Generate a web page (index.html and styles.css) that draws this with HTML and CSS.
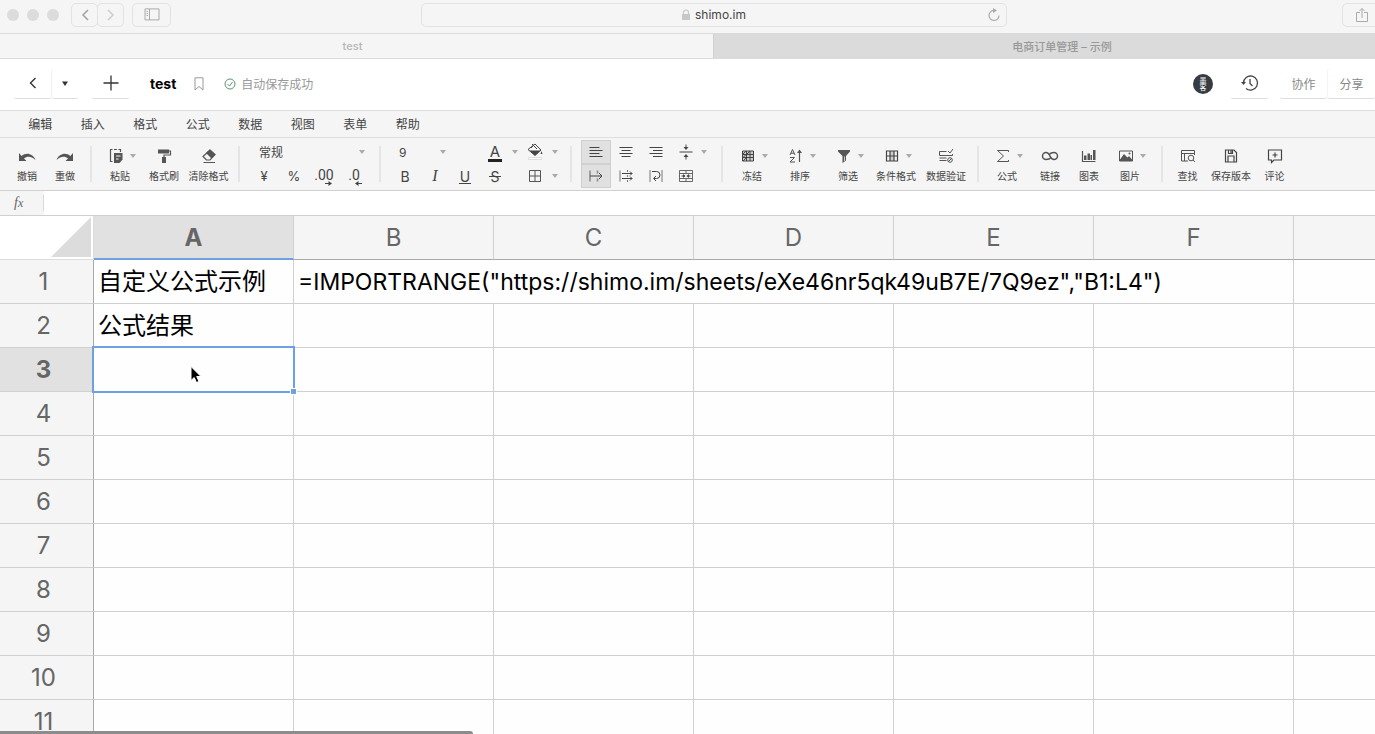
FILE: index.html
```html
<!DOCTYPE html>
<html lang="zh-CN">
<head>
  <meta charset="UTF-8">
  <title>test - 石墨表格</title>
  <link rel="stylesheet" href="styles.css">
</head>
<body>
<div class="page">

  <!-- browser window -->
  <div class="chrome">
    <div class="chrome-bar">
      <div class="chrome-left">
        <span class="dot"></span><span class="dot"></span><span class="dot"></span>
        <div class="nav-btns">
          <button class="chrome-btn nav" aria-label="后退"><svg width="10" height="14" viewBox="0 0 10 14"><path d="M8 2 3 7l5 5" stroke="#a2a2a2" stroke-width="1.5"/></svg></button>
          <button class="chrome-btn nav" aria-label="前进"><svg width="10" height="14" viewBox="0 0 10 14"><path d="m2 2 5 5-5 5" stroke="#cdcdcd" stroke-width="1.5"/></svg></button>
        </div>
        <button class="chrome-btn" aria-label="边栏"><svg width="16" height="13" viewBox="0 0 16 13"><path d="M1 .9h14v11H1zM5.500 1v11M2.500 3.500H4M2.500 5.500H4M2.500 7.500H4" stroke="#aaa"/></svg></button>
      </div>
      <div class="address">
        <span class="url">
          <svg width="10" height="12" viewBox="0 0 10 12"><path d="M2.500 6V3.500a2.500 2.500 0 0 1 5 0V6" stroke="#c8c8c8" stroke-width="1.200"/><path d="M1 5h8v6H1z" fill="#c8c8c8"/></svg>
          shimo.im
        </span>
        <button class="plain reload" aria-label="刷新"><svg width="14" height="14" viewBox="0 0 14 14"><path d="M7.500 2.500A5 5 0 1 0 12 7.500" stroke="#aaa" stroke-width="1.200"/><path d="M6 0v5l4-2.500z" fill="#aaa"/></svg></button>
      </div>
      <div class="chrome-right">
        <button class="chrome-btn" aria-label="共享"><svg width="14" height="16" viewBox="0 0 14 16"><path d="M5 5.500H1.500v9h11v-9H9M7 11V1.500M4.500 4 7 1.500 9.500 4" stroke="#aaa"/></svg></button>
      </div>
    </div>
    <div class="chrome-tabs">
      <a class="chrome-tab current" href="#">test</a>
      <a class="chrome-tab other" href="#">电商订单管理 – 示例</a>
      <span class="tab-add"></span>
    </div>
  </div>

  <!-- document header -->
  <header class="doc-head">
    <div class="btn-set">
      <button class="head-btn" aria-label="返回"><svg width="14" height="14" viewBox="0 0 14 14"><path d="M9.500 2 4.500 7l5 5" stroke="#333" stroke-width="1.400"/></svg></button>
      <button class="head-btn narrow" aria-label="更多"><svg width="6" height="5" viewBox="0 0 6 5"><path d="M0 .5h6L3 5z" fill="#333"/></svg></button>
    </div>
    <button class="head-btn add" aria-label="新建"><svg width="16" height="16" viewBox="0 0 16 16"><path d="M8 .5v15M.5 8h15" stroke="#333" stroke-width="1.300"/></svg></button>
    <h1 class="doc-title">test</h1>
    <button class="plain bookmark" aria-label="收藏"><svg width="10" height="14" viewBox="0 0 10 14"><path d="M1 .8h8v12.200L5 9.500 1 13z" stroke="#999"/></svg></button>
    <span class="saved"><svg width="12" height="12" viewBox="0 0 12 12"><circle cx="6" cy="6" r="5" stroke="#5f9277"/><path d="m3.500 6 2 2 3-4" stroke="#5f9277"/></svg>自动保存成功</span>
    <div class="head-right">
      <span class="avatar"><span>墨</span><span>客</span></span>
      <button class="head-btn history" aria-label="历史"><svg width="18" height="18" viewBox="0 0 18 18"><path d="M2.500 9A7 7 0 1 1 5 14.400" stroke="#444" stroke-width="1.300"/><path d="M0 8h5l-2.500 3z" fill="#444"/><path d="M9 5v4.500l2.500 2.500" stroke="#444" stroke-width="1.300"/></svg></button>
      <div class="btn-set">
        <button class="head-btn text">协作</button>
        <button class="head-btn text">分享</button>
      </div>
    </div>
  </header>

  <nav class="menu">
    <button>编辑</button><button>插入</button><button>格式</button><button>公式</button>
    <button>数据</button><button>视图</button><button>表单</button><button>帮助</button>
  </nav>

  <!-- toolbar -->
  <div class="toolbar">
    <div class="group edit">
      <button class="tool"><span class="ico"><svg width="18" height="16" viewBox="0 0 18 16"><path d="M1 5v8h7.500L6 10.600C9 8 13 8 17.500 12 15 5.500 8 4 3.600 8z" fill="#555"/></svg></span>撤销</button>
      <button class="tool"><span class="ico"><svg width="18" height="16" viewBox="0 0 18 16"><path d="M17 5v8H9.500l2.500-2.400C9 8 5 8 .5 12 3 5.500 10 4 14.400 8z" fill="#555"/></svg></span>重做</button>
    </div>
    <div class="group clip">
      <button class="tool"><span class="ico drop"><svg width="16" height="16" viewBox="0 0 16 16"><path d="M4.500 1.500h-2v12h2M10.500 1.500h2V4M6 1.500h3" stroke="#555" stroke-width="1.200"/><path d="M6 5h8.500v6.500L11.500 15H6z" fill="#555"/><path d="M8 8h4.500M8 11h2.500" stroke="#f5f5f5"/></svg><i class="caret"></i></span>粘贴</button>
      <button class="tool"><span class="ico"><svg width="16" height="16" viewBox="0 0 16 16"><path d="M2 1.500h11v4H2zM6 9h4v6H6z" fill="#555"/><path d="M13 3h1.500v4H8v2" stroke="#555" stroke-width="1.200"/></svg></span>格式刷</button>
      <button class="tool clear"><span class="ico"><svg width="16" height="16" viewBox="0 0 16 16"><path d="m9 1.500 5.500 5-4 4L5 5z" fill="#555"/><path d="M9 2 2 8.500 5.500 12H9l5-5.500zM2.500 14.500H14" stroke="#555" stroke-width="1.200"/></svg></span>清除格式</button>
    </div>
    <div class="group number">
      <label class="pick wide"><select aria-label="数字格式"><option>常规</option></select><i class="caret"></i></label>
      <button>¥</button>
      <button>%</button>
      <button class="dec" aria-label="增加小数位"><span>.00</span><svg width="7" height="5" viewBox="0 0 7 5"><path d="M0 2.500h4" stroke="#444"/><path d="M3.500 0v5L7 2.500z" fill="#444"/></svg></button>
      <button class="dec" aria-label="减少小数位"><span>.0</span><svg width="7" height="5" viewBox="0 0 7 5"><path d="M3 2.500h4" stroke="#444"/><path d="M3.500 0v5L0 2.500z" fill="#444"/></svg></button>
    </div>
    <div class="group font">
      <label class="pick size"><select aria-label="字号"><option>9</option></select><i class="caret"></i></label>
      <button class="color" aria-label="文字颜色">A</button><i class="caret"></i>
      <button aria-label="填充颜色"><svg width="16" height="18" viewBox="0 0 16 18"><path d="M1 6.500 8 1l6 6-6 5.500zM4 5l3-3M5 1l5 5" stroke="#444"/><path d="M2.500 7.500h11L8 12.500zM14.500 8l1 3h-2z" fill="#444"/><path d="M1.500 14.500h13v2h-13z" fill="#fff" stroke="#ddd"/></svg></button><i class="caret"></i>
      <button class="letter" aria-label="加粗">B</button>
      <button class="letter italic" aria-label="斜体">I</button>
      <button class="letter under" aria-label="下划线">U</button>
      <button class="letter strike" aria-label="删除线">S</button>
      <span></span>
      <button aria-label="边框"><svg width="14" height="14" viewBox="0 0 14 14"><path d="M1.500 1.500h11v11h-11zM7 1.500v11M1.500 7h11" stroke="#555"/></svg></button><i class="caret"></i>
    </div>
    <div class="group align">
      <button class="on" aria-label="左对齐"><svg width="14" height="12" viewBox="0 0 14 12"><path d="M.5 1.500h10M.5 4.500h13M.5 7.500h10M.5 10.500h13" stroke="#444"/></svg></button>
      <button aria-label="居中"><svg width="14" height="12" viewBox="0 0 14 12"><path d="M.5 1.500h13M2.500 4.500h9M.5 7.500h13M2.500 10.500h9" stroke="#444"/></svg></button>
      <button aria-label="右对齐"><svg width="14" height="12" viewBox="0 0 14 12"><path d="M.5 1.500h13M4 4.500h9.500M.5 7.500h13M4 10.500h9.500" stroke="#444"/></svg></button>
      <button aria-label="垂直居中"><svg width="14" height="16" viewBox="0 0 14 16"><path d="M.5 8h13M7 .5V4M7 15.500V12" stroke="#444"/><path d="M4.500 3h5L7 6zM4.500 13h5L7 10z" fill="#444"/></svg></button><i class="caret"></i>
      <button class="on" aria-label="溢出"><svg width="14" height="12" viewBox="0 0 14 12"><path d="M1 .5v11M8.500.5v3M8.500 8.500v3" stroke="#888" stroke-width="1.500"/><path d="M1 6h12M10 3l3 3-3 3" stroke="#444"/></svg></button>
      <button aria-label="截断"><svg width="14" height="12" viewBox="0 0 14 12"><path d="M1 .5v11M8.500 0v2M8.500 5v2M8.500 10v2" stroke="#777"/><path d="M3 3.500h10M3 8.500h10M11 1.500l2 2-2 2M11 6.500l2 2-2 2" stroke="#444"/></svg></button>
      <button aria-label="自动换行"><svg width="14" height="12" viewBox="0 0 14 12"><path d="M1 0v12M13 0v12" stroke="#777"/><path d="M3 1.500h4.500a3.500 3.500 0 0 1 0 7H5M7 6 4.500 8.500 7 11" stroke="#444"/></svg></button>
      <button aria-label="合并单元格"><svg width="14" height="12" viewBox="0 0 14 12"><path d="M.5.5h13v11H.5zM7 1v2M7 9v2.500M.5 3.500h13M.5 8.500h13" stroke="#666"/><path d="M2.500 6h3M8.500 6h3" stroke="#444"/><path d="M4 4v4l2.500-2zM10 4v4L7.500 6z" fill="#444"/></svg></button><span></span>
    </div>
    <div class="group data">
      <button class="tool"><span class="ico drop"><svg width="16" height="16" viewBox="0 0 16 16"><path d="M2.500 3h11v10h-11z" fill="#ccc"/><path d="M2.500 3h11v10h-11zM6.500 3v10M10 3v10M2.500 6.500h11M2.500 9.500h11" stroke="#444"/><path d="m3 6 3-3M7 6l3-3M3 9.500l3-3M3 13l3-3" stroke="#444"/></svg><i class="caret"></i></span>冻结</button>
      <button class="tool"><span class="ico drop"><svg width="16" height="16" viewBox="0 0 16 16"><path d="m2 7 2.500-5.500L7 7M3 5.200h3M2 9.500h4.500L2 14h5" stroke="#555"/><path d="M11.500 3v11" stroke="#555" stroke-width="1.200"/><path d="M9 5h5l-2.500-3.500z" fill="#555"/></svg><i class="caret"></i></span>排序</button>
      <button class="tool"><span class="ico drop"><svg width="16" height="16" viewBox="0 0 16 16"><path d="M2 2h12v1.500L10 8v4.500L6.500 15V8L2 3.500z" fill="#555"/><path d="M8.500 8.500V13" stroke="#ccc"/></svg><i class="caret"></i></span>筛选</button>
      <button class="tool"><span class="ico drop"><svg width="16" height="16" viewBox="0 0 16 16"><path d="M6 3h4v10H6z" fill="#ccc"/><path d="M2.500 3h11v10h-11zM6 3v10M10 3v10M2.500 8h11" stroke="#444" stroke-width="1.200"/></svg><i class="caret"></i></span>条件格式</button>
      <button class="tool last"><span class="ico"><svg width="16" height="16" viewBox="0 0 16 16"><path d="M8.500 3.500h-7v4h13V6M8.500 12.500h-7M1.500 10h7M10 3l2 2 3-4" stroke="#555"/><circle cx="12" cy="12" r="2.300" stroke="#555"/><path d="m10.500 13.500 3-3" stroke="#555"/></svg></span>数据验证</button>
    </div>
    <div class="group insert">
      <button class="tool"><span class="ico drop"><svg width="16" height="16" viewBox="0 0 16 16"><path d="M13.500 4V2.500h-11l6 5.500-6 5.500h11V12" stroke="#555"/></svg><i class="caret"></i></span>公式</button>
      <button class="tool link"><span class="ico"><svg width="18" height="16" viewBox="0 0 18 16"><path d="M10 9.500C8.500 11.500 6.500 11.500 5 11.500a3.500 3.500 0 0 1 0-7c2 0 3 1 4 3.500s2 3.500 4 3.500a3.500 3.500 0 0 0 0-7c-1.500 0-3 0-5 2" stroke="#555" stroke-width="1.500"/></svg></span>链接</button>
      <button class="tool chart"><span class="ico"><svg width="16" height="16" viewBox="0 0 16 16"><path d="M1.500 3v10.500h13" stroke="#555" stroke-width="1.200"/><path d="M3 7.500h2.500V12H3zM6.500 5.500H9V12H6.500zM9.500 7H11v5H9.500zM12 2h2.500v10H12z" fill="#555"/></svg></span>图表</button>
      <button class="tool picture"><span class="ico drop"><svg width="16" height="16" viewBox="0 0 16 16"><path d="M1.500 3h13v10h-13z" stroke="#555"/><path d="M2 11.500 6 6l3.500 3.500L11 8l3 3.500V13H2z" fill="#555"/><circle cx="11.500" cy="5.500" r="1" fill="#555"/></svg><i class="caret"></i></span>图片</button>
    </div>
    <div class="group review">
      <button class="tool"><span class="ico"><svg width="16" height="16" viewBox="0 0 16 16"><path d="M8 13H1.500V2.500h13V7M1.500 5.500h13M4.500 5.500V13" stroke="#555"/><circle cx="11" cy="10" r="2.800" stroke="#555"/><path d="m13 12 2 2" stroke="#555"/></svg></span>查找</button>
      <button class="tool save"><span class="ico"><svg width="16" height="16" viewBox="0 0 16 16"><path d="M2.500 2h8.500l2.500 2.500v9.500h-11zM5 14V8h6v6M5.500 2v3.500h4V2M8 2v3" stroke="#444" stroke-width="1.200"/></svg></span>保存版本</button>
      <button class="tool"><span class="ico"><svg width="16" height="16" viewBox="0 0 16 16"><path d="M1.500 2h13v10H7l-2.500 2.500V12h-3zM8 4.500v5M5.500 7h5" stroke="#444" stroke-width="1.200"/></svg></span>评论</button>
    </div>
  </div>

  <div class="formula">
    <label for="fx"><em>f</em>x</label>
    <input type="text" id="fx">
  </div>

  <main class="sheet">
    <table>
      <colgroup><col class="c-head"><col class="c"><col class="c"><col class="c"><col class="c"><col class="c"><col class="c"><col></colgroup>
      <thead>
        <tr>
          <th class="corner"><svg width="40" height="40" viewBox="0 0 40 40"><path d="M40 0v40H0z" fill="#dcdcdc"/></svg></th>
          <th class="active">A</th><th>B</th><th>C</th><th>D</th><th>E</th><th>F</th><th></th>
        </tr>
      </thead>
      <tbody>
        <tr><th>1</th><td>自定义公式示例</td><td colspan="5" class="latin">=IMPORTRANGE("https://shimo.im/sheets/eXe46nr5qk49uB7E/7Q9ez","B1:L4")</td><td></td></tr>
        <tr><th>2</th><td>公式结果</td><td></td><td></td><td></td><td></td><td></td><td></td></tr>
        <tr>
          <th class="active">3</th>
          <td class="selected">
            <div class="outline"></div>
            <svg class="pointer" width="14" height="20" viewBox="0 0 14 20"><path d="M2 1.500v14l3.200-3 2.300 5 2.500-1.100-2.300-4.900H12z" fill="#000" stroke="#fff"/></svg>
          </td>
          <td></td><td></td><td></td><td></td><td></td><td></td>
        </tr>
        <tr><th>4</th><td></td><td></td><td></td><td></td><td></td><td></td><td></td></tr>
        <tr><th>5</th><td></td><td></td><td></td><td></td><td></td><td></td><td></td></tr>
        <tr><th>6</th><td></td><td></td><td></td><td></td><td></td><td></td><td></td></tr>
        <tr><th>7</th><td></td><td></td><td></td><td></td><td></td><td></td><td></td></tr>
        <tr><th>8</th><td></td><td></td><td></td><td></td><td></td><td></td><td></td></tr>
        <tr><th>9</th><td></td><td></td><td></td><td></td><td></td><td></td><td></td></tr>
        <tr><th>10</th><td></td><td></td><td></td><td></td><td></td><td></td><td></td></tr>
        <tr><th>11</th><td></td><td></td><td></td><td></td><td></td><td></td><td></td></tr>
      </tbody>
    </table>
    <div class="scroll-thumb"></div>
  </main>
</div>
</body>
</html>
```
FILE: styles.css
```css
* { box-sizing: border-box; }
body { margin: 0; font-family: Inter, "Noto Sans CJK SC", sans-serif; font-size: 12px; color: #444; background: #fefefe; }
button { border: none; background: none; padding: 0; margin: 0; font: inherit; color: inherit; cursor: pointer; display: flex; align-items: center; justify-content: center; }
svg { fill: none; display: block; flex: none; }
.page { height: 100vh; display: flex; flex-direction: column; overflow: hidden; }

/* browser window, runs past the right edge */
.chrome { flex: none; width: calc(100% + 53px); background: #f5f5f5; }
.chrome-bar { display: grid; grid-template-columns: 1fr 41% 1fr; align-items: center; height: 34px; padding-bottom: 4px; border-bottom: 1px solid #dadada; }
.chrome-left { display: flex; align-items: center; padding-left: 7px; }
.dot { width: 12px; height: 12px; margin-right: 8px; border-radius: 50%; background: #dcdcdc; }
.nav-btns { display: flex; margin: 0 8px 0 4px; }
.chrome-btn { width: 39px; height: 24px; border: 1px solid #e2e2e2; border-radius: 5px; }
.chrome-btn.nav { width: 27px; }
.chrome-btn.nav + .nav { margin-left: -1px; }
.address { display: flex; align-items: center; height: 24px; padding: 0 5px 0 18px; border: 1px solid #e2e2e2; border-radius: 5px; }
.url { flex: 1; display: flex; justify-content: center; align-items: center; gap: 4px; color: #444; }
.chrome-right { display: flex; justify-content: flex-end; padding-right: 47px; }
.chrome-tabs { display: flex; height: 25px; border-bottom: 1px solid #dadada; background: #dbdbdb; }
.chrome-tab { display: flex; align-items: center; justify-content: center; font-size: 11px; font-weight: 500; text-decoration: none; color: #999; }
.chrome-tab.current { width: 50%; padding-right: 8px; color: #b5b5b5; background: #f5f5f5; border-right: 1px solid #d0d0d0; }
.chrome-tab.other { flex: 1; }
.tab-add { width: 18px; }

/* document header */
.doc-head { flex: none; display: flex; align-items: center; height: 52px; padding: 0 0 2px 14px; background: #fff; border-bottom: 1px solid #dcdcdc; }
.btn-set { display: flex; gap: 1px; }
.head-btn { width: 37px; height: 30px; border-bottom: 1px solid #dedede; border-radius: 2px; }
.head-btn.narrow { width: 26px; }
.head-btn.add { margin-left: 14px; }
.head-btn.text { width: 47px; color: #888; }
.btn-set .head-btn + .head-btn { box-shadow: -1px 0 #f3f3f3; }
.doc-title { margin: 0 18px 0 21px; font-size: 14px; font-weight: 700; color: #000; }
.saved { display: flex; align-items: center; gap: 5px; margin-left: 20px; color: #999; }
.head-right { display: flex; align-items: center; margin-left: auto; }
.avatar { display: flex; flex-direction: column; align-items: center; justify-content: center; width: 20px; height: 20px; border-radius: 50%; background: #363c42; color: #fff; font-size: 7px; line-height: 7px; }
.history { margin: 0 12px 0 18px; }

.menu { flex: none; display: grid; grid-template-columns: repeat(8, 1fr); height: 27px; padding: 0 calc(100% - 434px) 2px 14px; background: #f5f5f5; border-bottom: 1px solid #dedede; }

/* toolbar */
.toolbar { flex: none; display: flex; align-items: center; height: 53px; padding-left: 8px; background: #f5f5f5; border-bottom: 1px solid #d0d0d0; color: #444; }
.group { display: flex; flex: none; align-items: center; height: 48px; }
.group + .group { margin-left: 7px; padding-left: 9px; background: linear-gradient(#e5e5e5, #e5e5e5) 0 6px / 2px 36px no-repeat; }
.group + .group.clip { margin-left: 6px; padding-left: 8px; }
.tool { flex-direction: column; gap: 2px; width: 44px; padding-top: 2px; font-size: 10px; line-height: 16px; white-space: nowrap; }
.ico { display: flex; align-items: center; justify-content: center; height: 20px; }
.ico.drop { gap: 6px; padding-left: 4px; }
.caret { width: 6px; height: 4px; background: #aaa; clip-path: polygon(0 0, 100% 0, 50% 100%); place-self: center; }
.edit .tool { width: 38px; }
.clip .clear { width: 45px; }
.group.number, .group.font, .group.align { display: grid; grid-template-rows: 24px 24px; padding-left: 11px; }
.number > button, .font > button, .align > button { height: 24px; }
.group.number { grid-template-columns: repeat(4, 30px); width: 134px; font-size: 13px; }
.group.font { grid-template-columns: repeat(4, 30px) 10px 30px 10px; width: 184px; }
.group.align { grid-template-columns: repeat(4, 30px) 6px; width: 144px; }
.pick { display: flex; align-items: center; }
.pick select { flex: 1; appearance: none; border: none; background: none; padding: 0; margin: 0; font: inherit; font-size: 12px; color: #444; }
.pick.wide { grid-column: span 4; padding: 0 4px 0 10px; }
.pick.size { grid-column: span 3; padding: 0 34px 0 9px; }
.dec { flex-direction: column; align-items: center; font-family: Roboto, sans-serif; font-size: 14px; line-height: 12px; padding-top: 2px; }
.dec svg { align-self: flex-end; margin-right: 7px; }
.color { position: relative; font-size: 15px; line-height: 16px; }
.color::after { content: ""; position: absolute; bottom: 2px; left: 8px; width: 14px; height: 3px; background: #222; }
.letter { position: relative; font-size: 14px; }
.italic { font-family: "Liberation Serif", serif; font-style: italic; font-size: 16px; }
.under::after, .strike::after { content: ""; position: absolute; left: 9px; right: 9px; height: 1px; background: #444; }
.under::after { bottom: 4px; }
.strike::after { bottom: 11px; }
.align .on { background: #e0e0e0; border: 1px solid #d0d0d0; }
.data { gap: 4px; }
.data .last { width: 48px; }
.insert .tool { width: 42px; }
.insert .link { width: 44px; }
.insert .chart { width: 34px; }
.insert .picture { width: 48px; }
.review .tool { width: 35px; }
.review .save { width: 52px; }

.formula { flex: none; display: flex; align-items: center; height: 25px; background: #f5f5f5; border-bottom: 1px solid #d0d0d0; }
.formula label { width: 44px; padding-left: 14px; border-right: 1px solid #d8d8d8; font: italic 12px/16px "Liberation Serif", serif; color: #666; }
.formula em { font-size: 14px; }
.formula input { flex: 1; align-self: stretch; border: none; outline: none; background: #fff; padding: 0 6px; font: inherit; }

/* sheet */
.sheet { flex: 1; min-height: 0; position: relative; overflow: hidden; }
.sheet table { width: 100%; table-layout: fixed; border-collapse: separate; border-spacing: 0; font-size: 24px; line-height: 32px; color: #000; }
.c-head { width: 94px; }
.c { width: 200px; }
.sheet th, .sheet td { height: 44px; padding: 0 4px; border-right: 1px solid #d0d0d0; border-bottom: 1px solid #d0d0d0; white-space: nowrap; text-align: left; }
.sheet th { font-weight: 400; color: #666; background: #f5f5f5; text-align: center; }
.sheet thead th { border-bottom-color: #a9a9a9; }
.sheet tbody th { padding-right: 10px; border-right-color: #a9a9a9; }
.sheet th.active { background: #e1e1e1; font-weight: 700; }
.sheet thead th.active { padding-top: 1px; border-bottom: 2px solid #6ea1e2; }
.sheet tr > :last-child { border-right: none; }
.sheet .latin { font-size: 23px; }
.sheet thead .corner { padding: 0 2px 2px 51px; background: #fff; border-bottom-color: #ddd; border-right-color: #ddd; vertical-align: bottom; }
.selected { position: relative; }
.outline { position: absolute; inset: -2px; border: 2px solid #6ea1e2; z-index: 1; }
.outline::after { content: ""; position: absolute; right: -4px; bottom: -4px; width: 5px; height: 5px; background: #6ea1e2; border: 1px solid #fff; }
.pointer { position: absolute; left: 95px; top: 17px; z-index: 2; }
.scroll-thumb { position: absolute; left: -8px; bottom: -3px; width: 35%; height: 6px; border-radius: 3px; background: #8c8c8c; }
```
